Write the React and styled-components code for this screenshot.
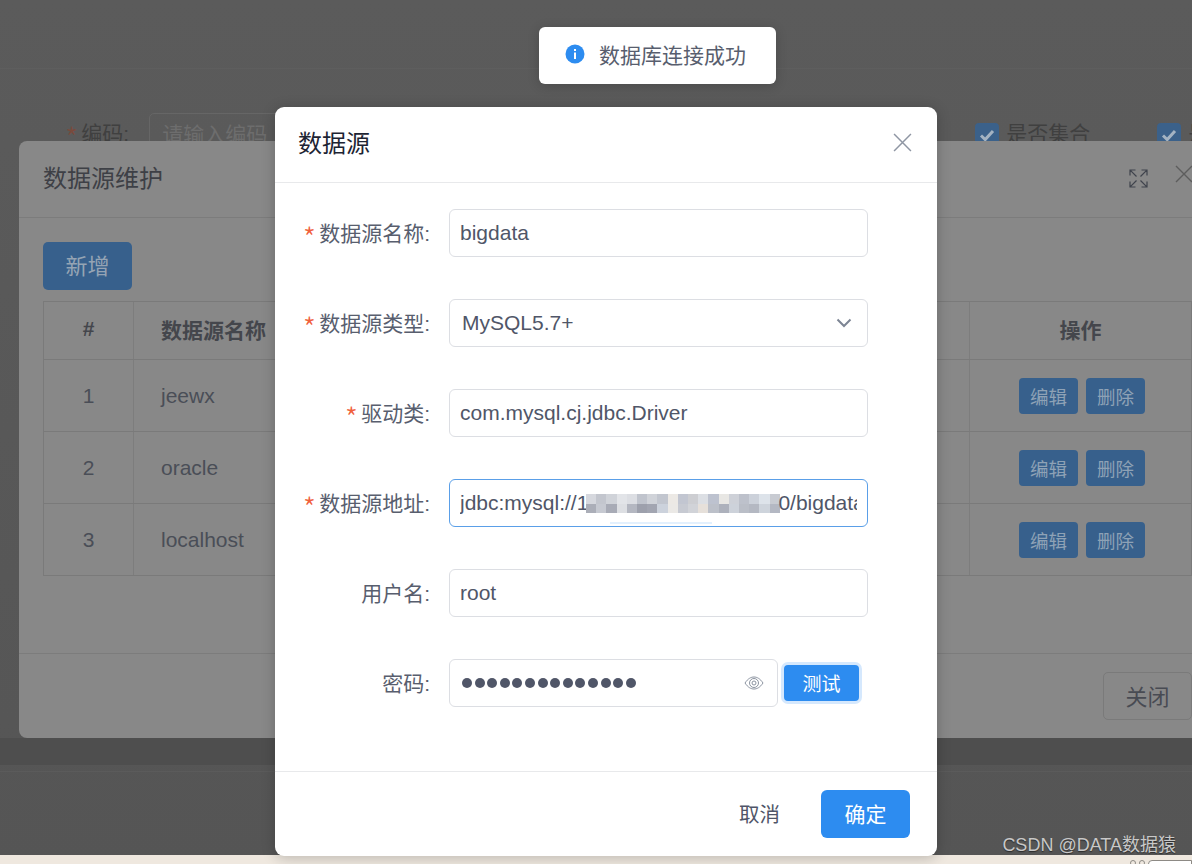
import React from 'react';
import styled, { createGlobalStyle } from 'styled-components';

const GlobalStyle = createGlobalStyle`
  html, body {
    margin: 0;
    padding: 0;
    background: #5a5a5a;
  }
  * {
    box-sizing: border-box;
  }
`;

const Page = styled.div`
  position: relative;
  width: 1192px;
  height: 864px;
  overflow: hidden;
  font-family: "Liberation Sans", "Noto Sans CJK SC", sans-serif;
`;

/* page behind the masks */
const Backdrop = styled.div`
  display: flex;
  flex-direction: column;
  height: 864px;
  background: linear-gradient(#5b5b5b, #555555);
`;

const TopBar = styled.div`
  height: 69px;
  border-bottom: 1px solid #5e5e5e;
`;

const BackForm = styled.div`
  flex: 1;
  display: flex;
  align-items: flex-start;
  padding: 44px 0 0 65px;
  color: #404040;
  font-size: 21px;
`;

const BackLabel = styled.span`
  flex: none;
  line-height: 42px;
  margin-right: 20px;
  white-space: nowrap;
`;

const Star = styled.span`
  font-family: "Noto Sans CJK SC", sans-serif;
  font-size: 30px;
  font-weight: 300;
  line-height: 0;
  vertical-align: -9px;
  margin-right: 3px;
  color: ${(p) => (p.$dim ? '#7a4a3c' : '#f0603c')};
`;

const BackInput = styled.div`
  flex: none;
  width: 300px;
  height: 48px;
  line-height: 42px;
  padding-left: 12px;
  border: 1px solid #666666;
  border-radius: 5px;
  color: #6d6d6d;
`;

const BackCheck = styled.div`
  flex: none;
  display: flex;
  gap: 7px;
  line-height: 42px;
  white-space: nowrap;
  margin-left: ${(p) => p.$left}px;
`;

const CheckBox = styled.span`
  display: flex;
  align-items: center;
  justify-content: center;
  width: 24px;
  height: 24px;
  margin-top: 10px;
  border-radius: 4px;
  background: #3b618a;
`;

const DarkStrip = styled.div`
  height: 27px;
  background: #4e4e4e;
`;

const BackFooter = styled.div`
  height: 90px;
  padding-top: 6px;
`;

const BackFooterLine = styled.div`
  height: 1px;
  background: #5b5b5b;
`;

const CreamStrip = styled.div`
  display: flex;
  justify-content: flex-end;
  align-items: flex-start;
  gap: 3px;
  height: 9px;
  padding-top: 5px;
  background: #efe8df;
`;

const TinyDot = styled.span`
  width: 6px;
  height: 6px;
  border-radius: 50%;
  border: 1px solid #8d8a85;
`;

const TinyBox = styled.span`
  width: 44px;
  height: 8px;
  border-radius: 4px 0 0 0;
  border: 1px solid #8d8a85;
  background: #ffffff;
`;

/* dialog under the second mask */
const MaintainDialog = styled.div`
  position: absolute;
  left: 19px;
  top: 141px;
  width: 1197px;
  height: 597px;
  display: flex;
  flex-direction: column;
  background: #888888;
  border-radius: 8px;
`;

const MaintainHeader = styled.div`
  display: flex;
  align-items: center;
  justify-content: space-between;
  height: 77px;
  padding: 0 24px 6px;
  border-bottom: 1px solid #7c7c7c;
  color: #3e4046;
  font-size: 24px;
`;

const HeaderIcons = styled.div`
  display: flex;
  align-items: center;
  gap: 27px;
  margin: 4px -1px 0 0;
`;

const RaisedClose = styled.span`
  display: flex;
  margin-top: -8px;
`;

const MaintainBody = styled.div`
  flex: 1;
  padding: 24px 24px 0;
  border-bottom: 1px solid #7c7c7c;
`;

const AddButton = styled.div`
  display: flex;
  align-items: center;
  justify-content: center;
  width: 89px;
  height: 48px;
  margin-bottom: 11px;
  padding-bottom: 5px;
  border-radius: 5px;
  background: #37608c;
  color: #95a4b4;
  font-size: 22px;
`;

const Table = styled.div`
  border: 1px solid #7a7a7a;
  border-bottom: none;
`;

const TableRow = styled.div`
  display: grid;
  grid-template-columns: 89px 836px 1fr;
  height: ${(p) => (p.$head ? 58 : 72)}px;
  border-bottom: 1px solid #7a7a7a;
  color: ${(p) => (p.$head ? '#44464c' : '#4a4e57')};
  font-size: 21px;
  font-weight: ${(p) => (p.$head ? 700 : 400)};

  & > div {
    padding-bottom: ${(p) => (p.$head ? 3 : 0)}px;
  }
`;

const TableCell = styled.div`
  display: flex;
  align-items: center;
  justify-content: ${(p) => (p.$center ? 'center' : 'flex-start')};
  gap: 8px;
  padding-left: ${(p) => (p.$center ? 0 : 27)}px;
  border-left: ${(p) => (p.$first ? 'none' : '1px solid #7d7d7d')};
`;

const OpsCell = styled(TableCell)`
  justify-content: flex-start;
  padding-left: 49px;
`;

const SmallButton = styled.div`
  display: flex;
  align-items: center;
  justify-content: center;
  width: 59px;
  height: 36px;
  border-radius: 4px;
  background: #37608c;
  color: #8ea2b6;
  font-size: 18.5px;
  font-weight: 400;
`;

const MaintainFooter = styled.div`
  display: flex;
  justify-content: flex-end;
  height: 84px;
  padding: 18px 24px 0 0;
`;

const CloseButton = styled.div`
  display: flex;
  align-items: center;
  justify-content: center;
  width: 89px;
  height: 48px;
  padding-bottom: 2px;
  border: 1px solid #7a7a7a;
  border-radius: 5px;
  color: #484b53;
  font-size: 22px;
`;

/* top dialog */
const Dialog = styled.div`
  position: absolute;
  left: 275px;
  top: 107px;
  width: 662px;
  height: 749px;
  display: flex;
  flex-direction: column;
  background: #ffffff;
  border-radius: 9px;
  box-shadow: 0 2px 14px rgba(0, 0, 0, 0.22);
`;

const DialogHeader = styled.div`
  display: flex;
  align-items: center;
  justify-content: space-between;
  height: 76px;
  padding: 0 25px 4px 23px;
  border-bottom: 1px solid #e8e9eb;
`;

const DialogTitle = styled.div`
  color: #1d2433;
  font-size: 24px;
  padding-bottom: 3px;
`;

const DialogForm = styled.div`
  flex: 1;
  display: flex;
  flex-direction: column;
  gap: 42px;
  padding-top: 26px;
  border-bottom: 1px solid #e8e9eb;
`;

const FormRow = styled.div`
  display: flex;
  align-items: center;
  height: 48px;
`;

const FieldLabel = styled.div`
  width: 155px;
  margin-right: 19px;
  padding-bottom: 2px;
  text-align: right;
  color: #585e6e;
  font-size: 21px;
  white-space: nowrap;
`;

const Field = styled.div`
  position: relative;
  display: flex;
  align-items: center;
  justify-content: space-between;
  width: ${(p) => p.$width || 419}px;
  height: 48px;
  padding: 0 10px;
  border: 1px solid ${(p) => (p.$focus ? '#5a9fe8' : '#dcdee3')};
  border-radius: 6px;
  color: #505668;
  font-size: 21px;
`;

const SelectText = styled.div`
  padding-left: 2px;
`;

const FieldText = styled.div`
  display: flex;
  align-items: center;
  overflow: hidden;
  white-space: nowrap;
`;

const Mosaic = styled.svg`
  flex: none;
  margin: 0 -2px 0 -2px;
`;

const FocusHint = styled.span`
  position: absolute;
  left: 160px;
  bottom: 2px;
  width: 102px;
  height: 2px;
  background: #e3f0fd;
`;

const Dots = styled.div`
  display: flex;
  gap: 2.6px;
  padding-left: 2px;
`;

const Dot = styled.span`
  width: 10px;
  height: 10px;
  border-radius: 50%;
  background: #505668;
`;

const EyeSlot = styled.span`
  display: flex;
  margin: 0 3px 0 0;
`;

const ChevronSlot = styled.span`
  display: flex;
  margin-right: 5px;
`;

const TestButton = styled.div`
  display: flex;
  align-items: center;
  justify-content: center;
  width: 75px;
  height: 36px;
  margin-left: 6px;
  padding-bottom: 2px;
  border-radius: 4px;
  background: #2d8cf0;
  box-shadow: 0 0 0 3px #d5e8fd;
  color: #ffffff;
  font-size: 19px;
`;

const DialogFooter = styled.div`
  display: flex;
  justify-content: flex-end;
  align-items: flex-start;
  height: 84px;
  padding: 18px 27px 0 0;
`;

const CancelButton = styled.div`
  display: flex;
  align-items: center;
  height: 48px;
  margin-right: 41px;
  padding-bottom: 2px;
  color: #4f5568;
  font-size: 20.5px;
`;

const OkButton = styled.div`
  display: flex;
  align-items: center;
  justify-content: center;
  width: 89px;
  height: 48px;
  padding-bottom: 2px;
  border-radius: 6px;
  background: #2d8cf0;
  color: #ffffff;
  font-size: 21px;
`;

/* toast */
const Toast = styled.div`
  position: absolute;
  left: 539px;
  top: 27px;
  display: flex;
  align-items: center;
  gap: 14px;
  width: 237px;
  height: 57px;
  padding: 0 0 3px 26px;
  background: #ffffff;
  border-radius: 6px;
  box-shadow: 0 2px 12px rgba(0, 0, 0, 0.18);
  color: #585e6e;
  font-size: 21px;
`;

const Watermark = styled.div`
  position: absolute;
  right: 16px;
  top: 833px;
  color: #c8c8c8;
  font-size: 18px;
  line-height: 24px;
  text-shadow: 0 1px 1px rgba(0, 0, 0, 0.5);
`;

const rows = [
  { id: 1, name: 'jeewx' },
  { id: 2, name: 'oracle' },
  { id: 3, name: 'localhost' },
];

const mosaicTop = ['#d6d8de', '#c3c6ce', '#d0d3d9', '#e2e4e8', '#dcdee3', '#c0c4cd', '#d0d3d9', '#c2c6cf', '#ece9e5', '#c2c6d1', '#cdced2', '#dcdfe4', '#bdc2cf', '#e8e7e4', '#ced1d8', '#bdc1cb', '#ccd1da', '#dde3ea', '#c8cbd2'];
const mosaicBottom = ['#abaeb8', '#c6c9d1', '#a8abb6', '#dddfe3', '#b4b7c1', '#9da0ac', '#a2a5b1', '#ccd2dc', '#ebe9e6', '#c7cad2', '#d1d3d8', '#e6e0da', '#bcc0c9', '#adb1bc', '#cdd2da', '#babec7', '#b4b8c2', '#ced4dc', '#b4b8c3'];

function CloseIcon({ size, color }) {
  return (
    <svg width={size} height={size} viewBox="0 0 18 18" fill="none" stroke={color} strokeWidth="1.4">
      <path d="M1 1 L17 17 M17 1 L1 17" />
    </svg>
  );
}

function FullscreenIcon() {
  return (
    <svg width="19" height="19" viewBox="0 0 19 19" fill="none" stroke="#3f434c" strokeWidth="1.2">
      <path d="M1 6.5V1H6.5 M1.4 1.4 L7.5 7.5 M12.5 1H18V6.5 M17.6 1.4 L11.5 7.5 M1 12.5V18H6.5 M1.4 17.6 L7.5 11.5 M12.5 18H18V12.5 M17.6 17.6 L11.5 11.5" />
    </svg>
  );
}

function CheckMark() {
  return (
    <svg width="16" height="13" viewBox="0 0 16 13" fill="none" stroke="#a4b3c2" strokeWidth="3">
      <path d="M2 6.5 L6.2 10.5 L14 2" />
    </svg>
  );
}

function InfoIcon() {
  return (
    <svg width="20" height="20" viewBox="0 0 20 20">
      <circle cx="10" cy="10" r="9.5" fill="#2d8cf0" />
      <rect x="9" y="8.5" width="2" height="6.5" fill="#ffffff" />
      <rect x="9" y="5" width="2" height="2" fill="#ffffff" />
    </svg>
  );
}

function ChevronIcon() {
  return (
    <svg width="16" height="10" viewBox="0 0 16 10" fill="none" stroke="#7d8594" strokeWidth="2">
      <path d="M1.5 1.5 L8 8 L14.5 1.5" />
    </svg>
  );
}

function EyeIcon() {
  return (
    <svg width="20" height="14" viewBox="0 0 20 14" fill="none" stroke="#8b93a0" strokeWidth="1">
      <path d="M1 7 C4 2.5 7 1 10 1 C13 1 16 2.5 19 7 C16 11.5 13 13 10 13 C7 13 4 11.5 1 7 Z" />
      <circle cx="10" cy="7" r="4.5" />
      <circle cx="10" cy="7" r="2" />
    </svg>
  );
}

function UrlMosaic() {
  return (
    <Mosaic width="194" height="19" viewBox="0 0 194 19" shapeRendering="crispEdges">
      <rect x="0" y="0" width="194" height="19" fill="#e6e8ec" />
      {mosaicTop.map((c, i) => (
        <rect key={i} x={i * 10.2} y="0" width="10.2" height="10" fill={c} />
      ))}
      {mosaicBottom.map((c, i) => (
        <rect key={i} x={i * 10.2} y="10" width="10.2" height="9" fill={c} />
      ))}
    </Mosaic>
  );
}

export default function App() {
  return (
    <Page>
      <GlobalStyle />
      <Backdrop>
        <TopBar />
        <BackForm>
          <BackLabel>
            <Star $dim>*</Star>编码:
          </BackLabel>
          <BackInput>请输入编码</BackInput>
          <BackCheck $left={526}>
            <CheckBox>
              <CheckMark />
            </CheckBox>
            是否集合
          </BackCheck>
          <BackCheck $left={67}>
            <CheckBox>
              <CheckMark />
            </CheckBox>
            是否
          </BackCheck>
        </BackForm>
        <DarkStrip />
        <BackFooter>
          <BackFooterLine />
        </BackFooter>
        <CreamStrip>
          <TinyDot />
          <TinyDot />
          <TinyBox />
        </CreamStrip>
      </Backdrop>

      <MaintainDialog>
        <MaintainHeader>
          数据源维护
          <HeaderIcons>
            <FullscreenIcon />
            <RaisedClose>
              <CloseIcon size={18} color="#5d5d5d" />
            </RaisedClose>
          </HeaderIcons>
        </MaintainHeader>
        <MaintainBody>
          <AddButton>新增</AddButton>
          <Table>
            <TableRow $head>
              <TableCell $first $center>#</TableCell>
              <TableCell>数据源名称</TableCell>
              <TableCell $center>操作</TableCell>
            </TableRow>
            {rows.map((row) => (
              <TableRow key={row.id}>
                <TableCell $first $center>{row.id}</TableCell>
                <TableCell>{row.name}</TableCell>
                <OpsCell>
                  <SmallButton>编辑</SmallButton>
                  <SmallButton>删除</SmallButton>
                </OpsCell>
              </TableRow>
            ))}
          </Table>
        </MaintainBody>
        <MaintainFooter>
          <CloseButton>关闭</CloseButton>
        </MaintainFooter>
      </MaintainDialog>

      <Dialog>
        <DialogHeader>
          <DialogTitle>数据源</DialogTitle>
          <CloseIcon size={19} color="#8f96a3" />
        </DialogHeader>
        <DialogForm>
          <FormRow>
            <FieldLabel><Star>*</Star>数据源名称:</FieldLabel>
            <Field>bigdata</Field>
          </FormRow>
          <FormRow>
            <FieldLabel><Star>*</Star>数据源类型:</FieldLabel>
            <Field>
              <SelectText>MySQL5.7+</SelectText>
              <ChevronSlot>
                <ChevronIcon />
              </ChevronSlot>
            </Field>
          </FormRow>
          <FormRow>
            <FieldLabel><Star>*</Star>驱动类:</FieldLabel>
            <Field>com.mysql.cj.jdbc.Driver</Field>
          </FormRow>
          <FormRow>
            <FieldLabel><Star>*</Star>数据源地址:</FieldLabel>
            <Field $focus>
              <FieldText>
                jdbc:mysql://1
                <UrlMosaic />
                0/bigdata
              </FieldText>
              <FocusHint />
            </Field>
          </FormRow>
          <FormRow>
            <FieldLabel>用户名:</FieldLabel>
            <Field>root</Field>
          </FormRow>
          <FormRow>
            <FieldLabel>密码:</FieldLabel>
            <Field $width={329}>
              <Dots>
                {Array.from({ length: 14 }, (_, i) => (
                  <Dot key={i} />
                ))}
              </Dots>
              <EyeSlot>
                <EyeIcon />
              </EyeSlot>
            </Field>
            <TestButton>测试</TestButton>
          </FormRow>
        </DialogForm>
        <DialogFooter>
          <CancelButton>取消</CancelButton>
          <OkButton>确定</OkButton>
        </DialogFooter>
      </Dialog>

      <Toast>
        <InfoIcon />
        数据库连接成功
      </Toast>

      <Watermark>CSDN @DATA数据猿</Watermark>
    </Page>
  );
}
